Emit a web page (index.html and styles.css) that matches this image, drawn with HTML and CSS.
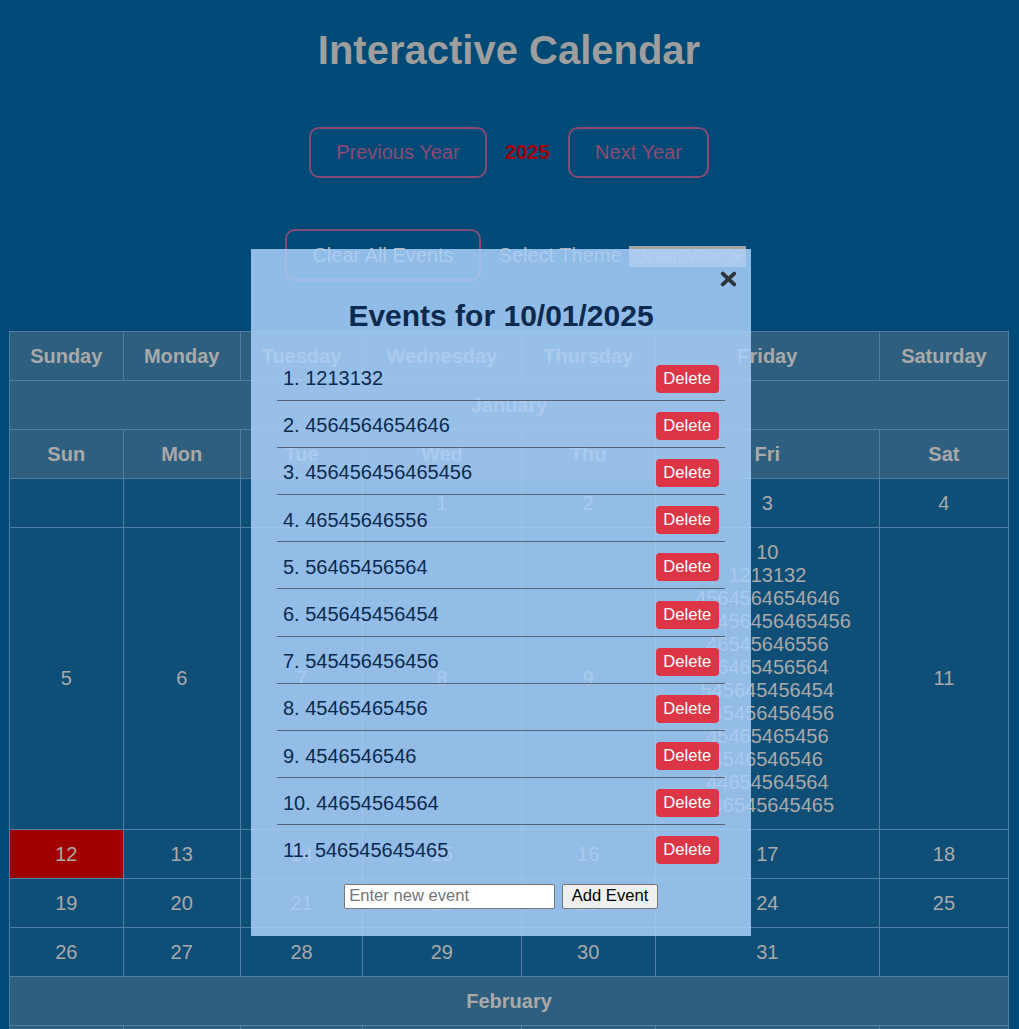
FILE: index.html
```html
<!DOCTYPE html>
<html lang="en">
<head>
<meta charset="utf-8">
<title>Interactive Calendar</title>
<link rel="stylesheet" href="styles.css">
</head>
<body>
<div class="page">
  <h1 class="title">Interactive Calendar</h1>
  <div class="year-nav">
    <button class="btn">Previous Year</button>
    <span class="year">2025</span>
    <button class="btn">Next Year</button>
  </div>
  <div class="tools">
    <button class="btn btn-clear">Clear All Events</button>
    <label class="theme-label">Select Theme</label>
    <select class="theme-select"><option>Ocean View</option></select>
  </div>
  <table class="calendar">
    <thead>
      <tr><th>Sunday</th><th>Monday</th><th>Tuesday</th><th>Wednesday</th><th>Thursday</th><th>Friday</th><th>Saturday</th></tr>
    </thead>
    <tbody>
      <tr><th colspan="7">January</th></tr>
      <tr><th>Sun</th><th>Mon</th><th>Tue</th><th>Wed</th><th>Thu</th><th>Fri</th><th>Sat</th></tr>
      <tr><td></td><td></td><td></td><td>1</td><td>2</td><td>3</td><td>4</td></tr>
      <tr><td>5</td><td>6</td><td>7</td><td>8</td><td>9</td>
        <td><div>10</div>
          <div>1213132</div>
          <div>4564564654646</div>
          <div>456456456465456</div>
          <div>46545646556</div>
          <div>56465456564</div>
          <div>545645456454</div>
          <div>545456456456</div>
          <div>45465465456</div>
          <div>4546546546</div>
          <div>44654564564</div>
          <div>546545645465</div>
        </td>
        <td>11</td></tr>
      <tr><td class="today">12</td><td>13</td><td>14</td><td>15</td><td>16</td><td>17</td><td>18</td></tr>
      <tr><td>19</td><td>20</td><td>21</td><td>22</td><td>23</td><td>24</td><td>25</td></tr>
      <tr><td>26</td><td>27</td><td>28</td><td>29</td><td>30</td><td>31</td><td></td></tr>
      <tr><th colspan="7">February</th></tr>
      <tr><th>Sun</th><th>Mon</th><th>Tue</th><th>Wed</th><th>Thu</th><th>Fri</th><th>Sat</th></tr>
      <tr><td></td><td></td><td></td><td></td><td></td><td></td><td>1</td></tr>
      <tr><td>2</td><td>3</td><td>4</td><td>5</td><td>6</td><td>7</td><td>8</td></tr>
      <tr><td>9</td><td>10</td><td>11</td><td>12</td><td>13</td><td>14</td><td>15</td></tr>
      <tr><td>16</td><td>17</td><td>18</td><td>19</td><td>20</td><td>21</td><td>22</td></tr>
      <tr><td>23</td><td>24</td><td>25</td><td>26</td><td>27</td><td>28</td><td></td></tr>
    </tbody>
  </table>
</div>

<div class="modal">
  <span class="close" aria-label="Close">
    <svg width="17" height="16" viewBox="0 0 17 16"><path d="M2.8 2.6 L14.2 13.4 M14.2 2.6 L2.8 13.4" stroke="#2e3338" stroke-width="3.8" stroke-linecap="round" fill="none"/></svg>
  </span>
  <h2 class="modal-title">Events for 10/01/2025</h2>
  <ul class="event-list">
    <li><span>1. 1213132</span><button class="del">Delete</button></li>
    <li><span>2. 4564564654646</span><button class="del">Delete</button></li>
    <li><span>3. 456456456465456</span><button class="del">Delete</button></li>
    <li><span>4. 46545646556</span><button class="del">Delete</button></li>
    <li><span>5. 56465456564</span><button class="del">Delete</button></li>
    <li><span>6. 545645456454</span><button class="del">Delete</button></li>
    <li><span>7. 545456456456</span><button class="del">Delete</button></li>
    <li><span>8. 45465465456</span><button class="del">Delete</button></li>
    <li><span>9. 4546546546</span><button class="del">Delete</button></li>
    <li><span>10. 44654564564</span><button class="del">Delete</button></li>
    <li><span>11. 546545645465</span><button class="del">Delete</button></li>
  </ul>
  <div class="add-row">
    <input class="add-input" type="text" placeholder="Enter new event">
    <button class="add-btn">Add Event</button>
  </div>
</div>
</body>
</html>
```

FILE: styles.css
```css
html, body {
  margin: 0;
  padding: 0;
}

body {
  background: #004a77;
  font-family: "Liberation Sans", Arial, sans-serif;
  font-size: 20px;
  color: #a9a9a9;
}

.page {
  padding: 0 10px 0 9px;
}

.title {
  margin: 27px 0 0;
  font-size: 40px;
  line-height: 46px;
  font-weight: bold;
  text-align: center;
  color: #9e9e9e;
}

.year-nav {
  margin-top: 54px;
  display: flex;
  justify-content: center;
  align-items: center;
  gap: 18px;
}

.btn {
  font-family: "Liberation Sans", Arial, sans-serif;
  font-size: 20px;
  line-height: 23px;
  padding: 12px 25.5px;
  border: 2px solid #8a4a76;
  border-radius: 10px;
  background: transparent;
  color: #8c4a72;
  margin: 0;
}

.year {
  font-weight: bold;
  color: #a0000c;
}

.tools {
  margin-top: 51px;
  padding-left: 13px;
  display: flex;
  justify-content: center;
  align-items: center;
}

.btn-clear {
  color: #b4b4b4;
  margin-right: 18px;
  padding: 12.5px 25px;
}

.theme-label {
  color: #b0b0b0;
  margin-right: 7px;
}

.theme-select {
  width: 117px;
  height: 21px;
  margin-top: 3px;
  font-family: "Liberation Sans", Arial, sans-serif;
  font-size: 16px;
  background: #a6a6a6;
  color: #d6d6d6;
  border: none;
  padding: 0 2px;
}

.calendar {
  margin-top: 50px;
  width: 100%;
  border-collapse: collapse;
}

.calendar th,
.calendar td {
  border: 1px solid #4f80a3;
  padding: 12.5px 12px;
  line-height: 23px;
  text-align: center;
  vertical-align: middle;
}

.calendar th {
  background: #2f5f7e;
  font-weight: bold;
}

.calendar td {
  background: #0f4e77;
}

.calendar td.today {
  background: #a00000;
}

.modal {
  position: absolute;
  top: 249px;
  left: 251px;
  width: 500px;
  box-sizing: border-box;
  padding: 20px 26px 27px;
  background: rgba(170, 208, 250, 0.85);
  color: #0b2a4e;
}

.close {
  position: absolute;
  top: 22px;
  right: 14px;
  width: 17px;
  height: 16px;
  display: block;
}

.close svg {
  display: block;
}

.modal-title {
  margin: 30px 0 20px;
  font-size: 30px;
  line-height: 34.5px;
  font-weight: bold;
  text-align: center;
}

.event-list {
  list-style: none;
  margin: 0;
  padding: 0;
}

.event-list li {
  display: flex;
  justify-content: space-between;
  align-items: center;
  padding: 11.1px 6px 7.1px;
  border-bottom: 1px solid #556374;
  font-size: 20px;
  line-height: 23px;
}

.event-list li:last-child {
  border-bottom: none;
}

.del {
  font-family: "Liberation Sans", Arial, sans-serif;
  font-size: 16.6px;
  line-height: 18px;
  padding: 5px 7.7px;
  border: none;
  border-radius: 4px;
  background: #dc3545;
  color: #ffffff;
  margin: 0;
}

.add-row {
  margin-top: 12px;
  display: flex;
  justify-content: center;
  gap: 7px;
}

.add-input {
  width: 211px;
  height: 25px;
  box-sizing: border-box;
  font-family: "Liberation Sans", Arial, sans-serif;
  font-size: 16.6px;
  padding: 1px 4px;
  border: 1px solid #767676;
  border-radius: 2px;
  background: #ffffff;
  color: #000;
  margin: 0;
}

.add-input::placeholder {
  color: #757575;
}

.add-btn {
  height: 25px;
  box-sizing: border-box;
  font-family: "Liberation Sans", Arial, sans-serif;
  font-size: 16.6px;
  line-height: 18px;
  padding: 1px 8.5px;
  border: 1px solid #767676;
  border-radius: 2px;
  background: #efefef;
  color: #000;
  margin: 0;
}
```
